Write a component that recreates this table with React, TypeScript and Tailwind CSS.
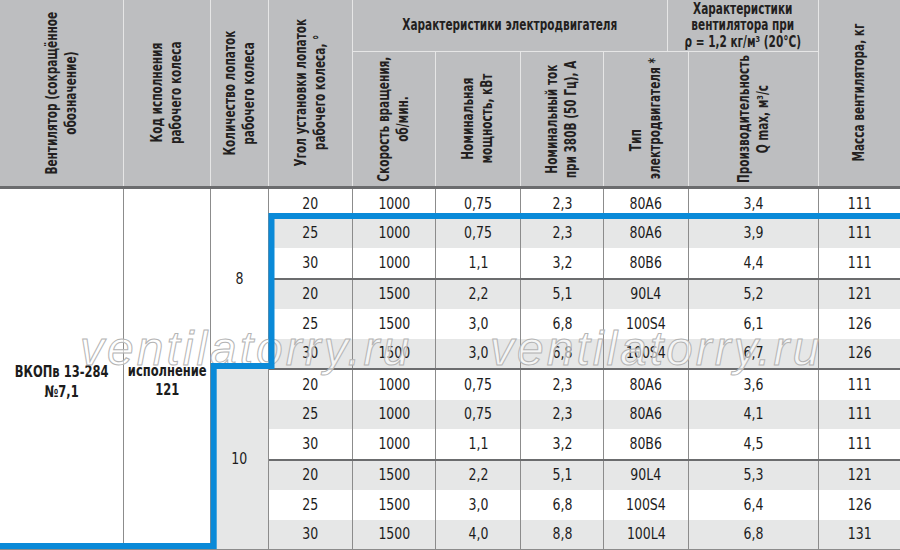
const rows: (string | number)[][] = [
  [20, 1000, '0,75', '2,3', '80A6', '3,4', 111],
  [25, 1000, '0,75', '2,3', '80A6', '3,9', 111],
  [30, 1000, '1,1', '3,2', '80B6', '4,4', 111],
  [20, 1500, '2,2', '5,1', '90L4', '5,2', 121],
  [25, 1500, '3,0', '6,8', '100S4', '6,1', 126],
  [30, 1500, '3,0', '6,8', '100S4', '6,7', 126],
  [20, 1000, '0,75', '2,3', '80A6', '3,6', 111],
  [25, 1000, '0,75', '2,3', '80A6', '4,1', 111],
  [30, 1000, '1,1', '3,2', '80B6', '4,5', 111],
  [20, 1500, '2,2', '5,1', '90L4', '5,3', 121],
  [25, 1500, '3,0', '6,8', '100S4', '6,4', 126],
  [30, 1500, '4,0', '8,8', '100L4', '6,8', 131],
];

const widths = ['w-[84px]', 'w-[83px]', 'w-[85px]', 'w-[83px]', 'w-[85px]', 'w-[130px]', 'w-[81px]'];

// condensed bold headers: DejaVu Sans Condensed squeezed along the text direction
function VText({ children, className = '' }: { children: React.ReactNode; className?: string }) {
  return (
    <div className={`flex items-center justify-center min-h-0 overflow-visible ${className}`}>
      <div className="[writing-mode:vertical-rl] rotate-180 scale-y-[0.78] text-center leading-[19px] whitespace-nowrap">
        {children}
      </div>
    </div>
  );
}

export default function App() {
  return (
    <div
      className="relative w-[900px] h-[550px] overflow-hidden bg-white text-[#1c1c1c]"
      style={{ fontFamily: '"DejaVu Sans Condensed", "Liberation Sans", Arial, sans-serif' }}
    >
      {/* header */}
      <div className="flex h-[189px] bg-[#bdbec0] border-b-[3px] border-[#6b6c6e] text-[15px] font-bold text-[#231f20]">
        <VText className="w-[124px] border-r border-[#e6e6e6]">
          Вентилятор (сокращённое<br />обозначение)
        </VText>
        <VText className="w-[87px] border-r border-[#e6e6e6]">
          Код исполнения<br />рабочего колеса
        </VText>
        <VText className="w-[58px] border-r border-[#e6e6e6]">
          Количество лопаток<br />рабочего колеса
        </VText>
        <VText className="w-[84px] border-r border-[#e6e6e6]">
          Угол установки лопаток<br />рабочего колеса, °
        </VText>
        <div className="w-[466px] flex flex-col border-r border-[#e6e6e6]">
          <div className="flex h-[52px] shrink-0 border-b border-[#e6e6e6]">
            <div className="w-[336px] border-r border-[#e6e6e6] flex items-center justify-center">
              <span className="inline-block scale-x-[0.78] whitespace-nowrap">Характеристики электродвигателя</span>
            </div>
            <div className="flex-1 flex items-center justify-center">
              <div className="scale-x-[0.78] text-center leading-[16.5px] whitespace-nowrap">
                Характеристики<br />вентилятора при<br />ρ = 1,2 кг/м³ (20°C)
              </div>
            </div>
          </div>
          <div className="flex flex-1 min-h-0">
            <VText className="w-[83px] border-r border-[#e6e6e6]">
              Скорость вращения,<br />об/мин.
            </VText>
            <VText className="w-[85px] border-r border-[#e6e6e6]">
              Номинальная<br />мощность, кВт
            </VText>
            <VText className="w-[83px] border-r border-[#e6e6e6]">
              Номинальный ток<br />при 380В (50 Гц), А
            </VText>
            <VText className="w-[85px] border-r border-[#e6e6e6]">
              <span className="inline-block pe-14">Тип</span>
              <br />
              электродвигателя *
            </VText>
            <VText className="flex-1">
              Производительность<br />Q max, м³/с
            </VText>
          </div>
        </div>
        <VText className="flex-1">Масса вентилятора, кг</VText>
      </div>

      {/* body */}
      <div className="flex border-b border-[#8c8c8c] text-[16px]">
        <div className="w-[124px] border-r border-[#8c8c8c] flex items-center justify-center pt-[26px] font-bold">
          <div className="scale-x-[0.8] text-center leading-[20px] whitespace-nowrap">
            ВКОПв 13-284
            <br />
            №7,1
          </div>
        </div>
        <div className="w-[87px] border-r border-[#8c8c8c] flex items-center justify-center pt-[22px] font-bold">
          <div className="scale-x-[0.8] text-center leading-[19px] whitespace-nowrap">
            исполнение
            <br />
            121
          </div>
        </div>
        <div className="w-[58px] border-r border-[#8c8c8c] flex flex-col">
          <div className="h-[179px] flex items-center justify-center">
            <span className="inline-block scale-x-[0.87]">8</span>
          </div>
          <div className="flex-1 bg-[#e6e7e7] flex items-center justify-center">
            <span className="inline-block scale-x-[0.87]">10</span>
          </div>
        </div>
        <div className="flex-1 flex flex-col">
          {rows.map((r, i) => (
            <div
              key={i}
              className={`flex h-[29.5px] box-content ${i % 2 === 1 ? 'bg-[#e6e7e7]' : 'bg-white'} ${
                i === 3 || i === 6 || i === 9 ? 'border-t-2 border-[#6b6c6e]' : ''
              }`}
            >
              {r.map((v, j) => (
                <div
                  key={j}
                  className={`${widths[j]} flex items-center justify-center ${j < 6 ? 'border-r border-[#8c8c8c]' : ''}`}
                >
                  <span className="inline-block scale-x-[0.87]">{v}</span>
                </div>
              ))}
            </div>
          ))}
        </div>
      </div>

      {/* watermark */}
      <div
        className="absolute left-[80px] top-[325px] text-[48px] leading-none italic tracking-[3px] text-white/60 [-webkit-text-stroke:1px_#b4b4b4] pointer-events-none"
        style={{ fontFamily: '"Liberation Sans", Arial, sans-serif' }}
      >
        ventilatorry.ru
      </div>
      <div
        className="absolute left-[490px] top-[325px] text-[48px] leading-none italic tracking-[3px] text-white/60 [-webkit-text-stroke:1px_#b4b4b4] pointer-events-none"
        style={{ fontFamily: '"Liberation Sans", Arial, sans-serif' }}
      >
        ventilatorry.ru
      </div>

      {/* selection outline */}
      <svg className="absolute inset-0 pointer-events-none" width="900" height="550">
        <polyline
          points="910,216 271.5,216 271.5,366 213.7,366 213.7,546 -10,546"
          fill="none"
          stroke="#0a8ad8"
          strokeWidth="6"
          strokeLinejoin="miter"
        />
      </svg>
    </div>
  );
}
